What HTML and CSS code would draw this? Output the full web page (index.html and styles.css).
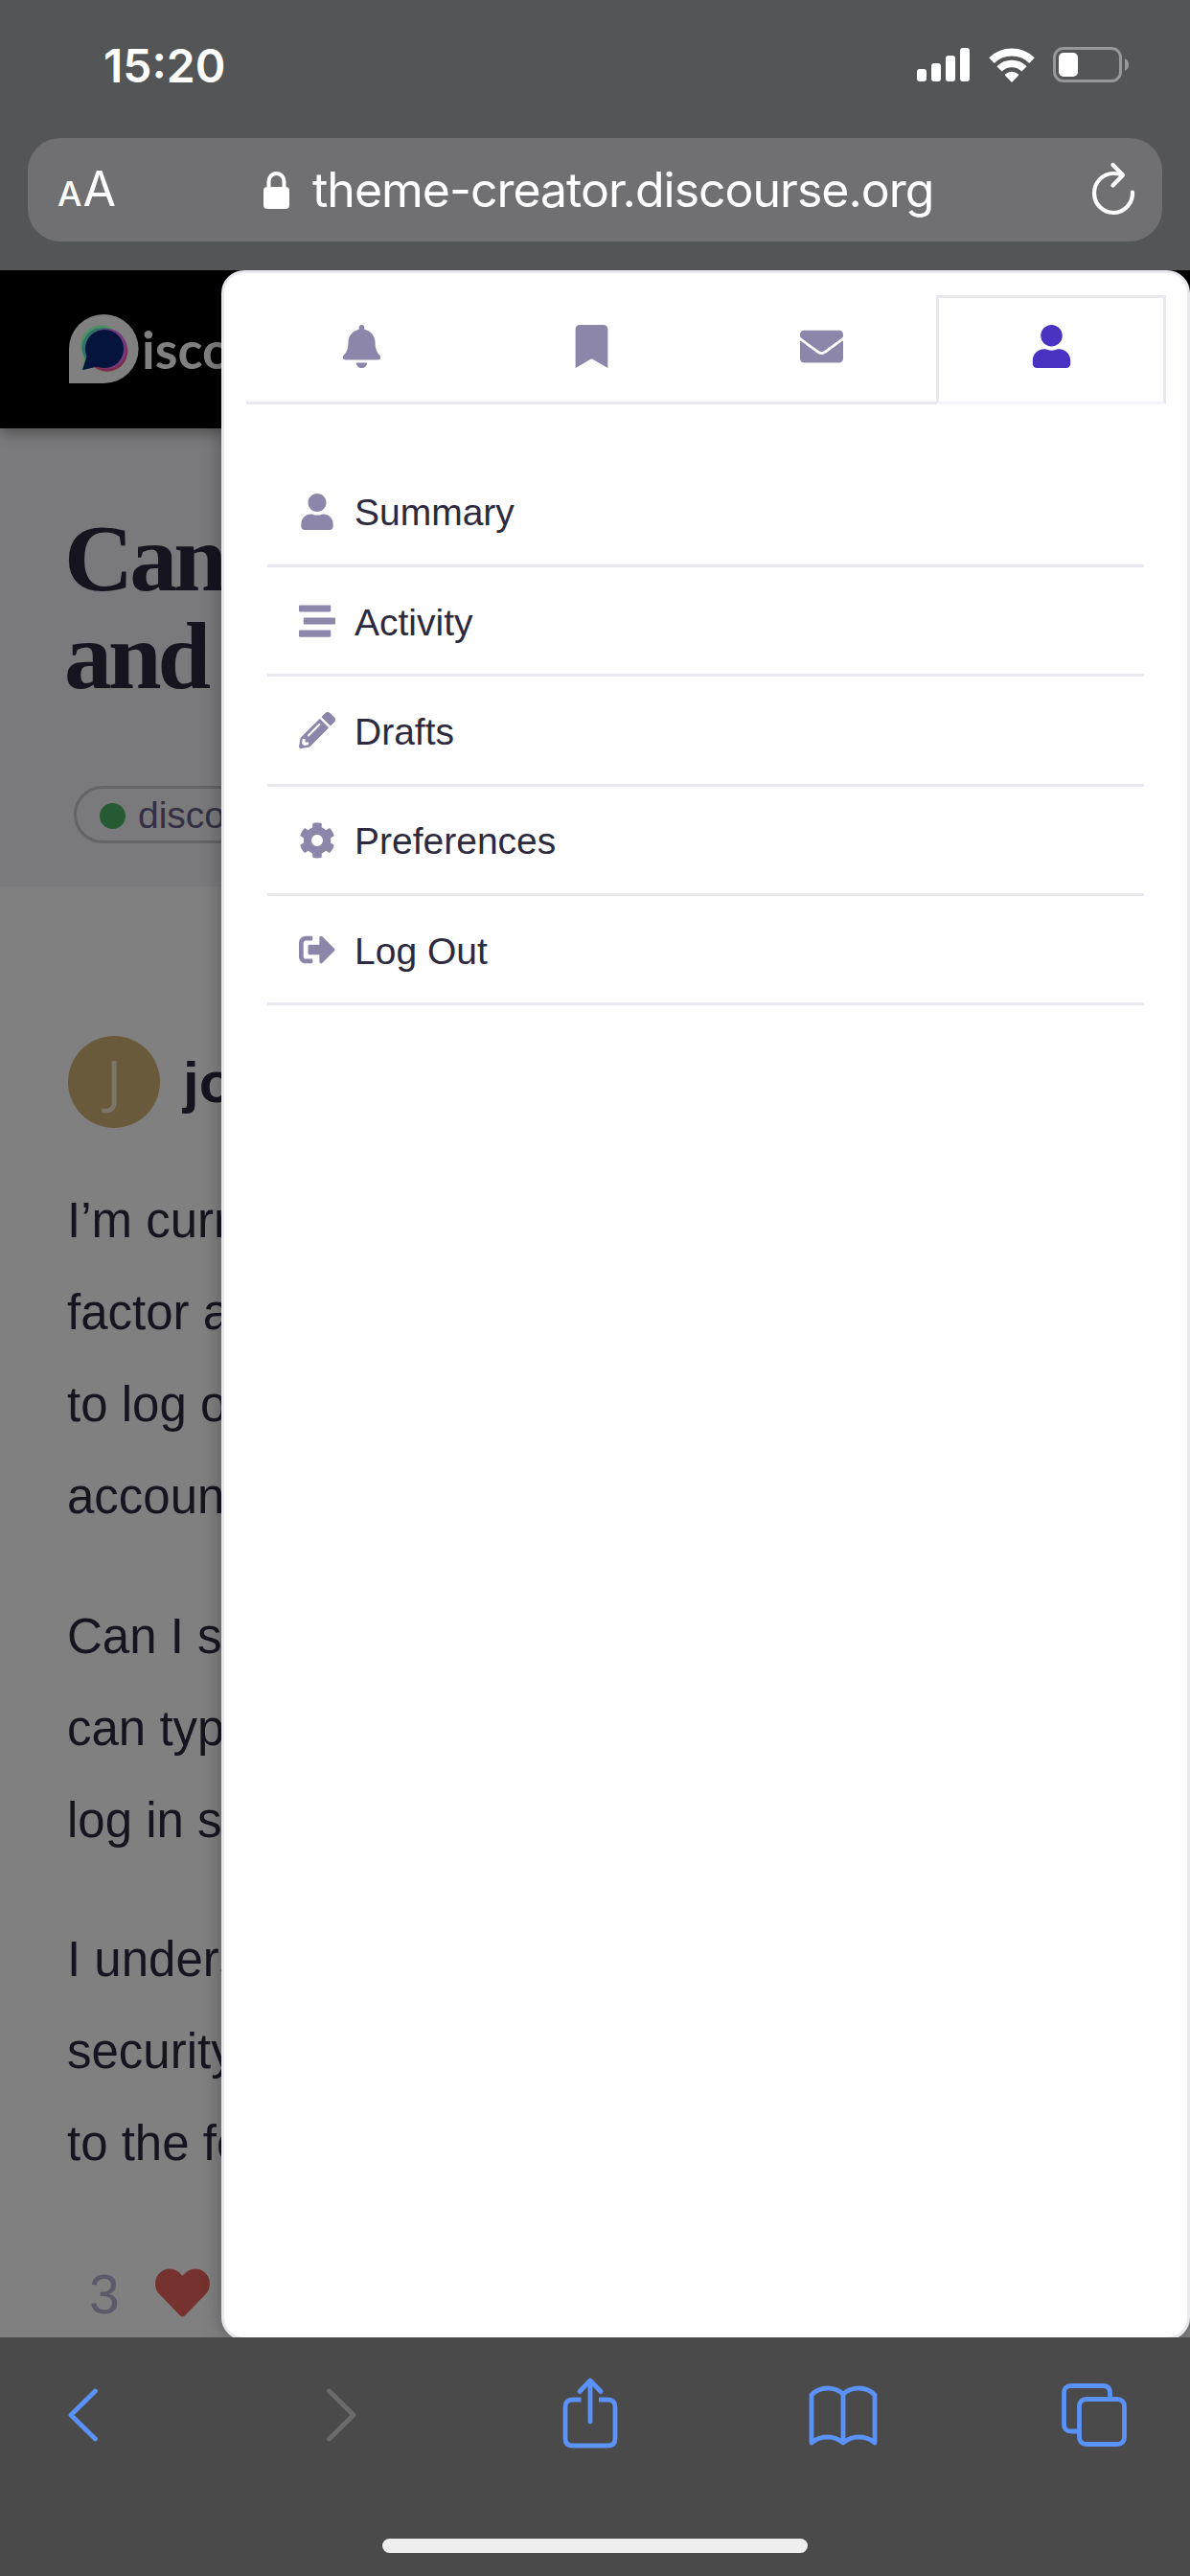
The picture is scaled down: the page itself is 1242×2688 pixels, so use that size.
FILE: index.html
```html
<!DOCTYPE html>
<html lang="en">
<head>
<meta charset="utf-8">
<title>theme-creator.discourse.org</title>
<link rel="stylesheet" href="styles.css">
</head>
<body>
<div class="phone">
  <header class="chrome">
    <div class="status">
      <span class="clock">15:20</span>
      <div class="indicators">
        <svg width="55" height="35" viewBox="0 0 55 35" fill="#fff"><rect y="22" width="10" height="13" rx="3"/><rect x="15" y="16" width="10" height="19" rx="3"/><rect x="30" y="8" width="10" height="27" rx="3"/><rect x="45" width="10" height="35" rx="3"/></svg>
        <svg class="wifi" width="48" height="36" viewBox="0 0 48 36" fill="none" stroke="#fff"><path stroke-width="8" d="M3 13.200A30 30 0 0 1 45 13.200"/><path stroke-width="7.500" d="M11 21.800A18.500 18.500 0 0 1 37 21.800"/><path fill="#fff" stroke="none" d="M24 36L17 28.700Q16.500 28 17.300 27.300Q24 22.300 30.700 27.300Q31.500 28 31 28.700Z"/></svg>
        <svg class="battery" width="80" height="37" viewBox="0 0 80 37"><rect x="1.500" y="1.500" width="69" height="34" rx="9.500" fill="none" stroke="#97989a" stroke-width="3"/><rect x="6" y="6" width="20" height="25" rx="5" fill="#fff"/><path d="M75 12Q79 14 79 18.500T75 25Z" fill="#97989a"/></svg>
      </div>
    </div>
    <div class="address">
      <span class="reader"><span class="reader-small">A</span><span class="reader-big">A</span></span>
      <div class="site">
        <svg width="27" height="39" viewBox="0 0 27 39"><path d="M5.500 18V10.500a8 8.500 0 0 1 16 0V18" fill="none" stroke="#fff" stroke-width="4"/><rect y="16" width="27" height="23" rx="4" fill="#fff"/></svg>
        <span class="url">theme-creator.discourse.org</span>
      </div>
      <svg class="reload" width="48" height="56" viewBox="0 0 48 56" fill="none" stroke="#fff" stroke-width="4.200" stroke-linecap="round" stroke-linejoin="round"><path d="M44 31.500A20 20.500 0 1 1 24 12Q29 12 33 13.500"/><path d="M23.500 3L34 13.800L23.500 24.500"/></svg>
    </div>
  </header>

  <main class="viewport">
    <div class="site-header">
      <svg width="73" height="72" viewBox="0 0 73 72"><path d="M0 72V36A36.300 36 0 1 1 36.300 72Z" fill="#808080"/><circle cx="33.700" cy="33" r="21.500" fill="#47935f"/><path d="M14 58L16 44L30 52Z" fill="#47935f"/><circle cx="35" cy="35" r="21.300" fill="#34706b"/><circle cx="39.800" cy="38.200" r="21.500" fill="#7c2b42"/><circle cx="39.500" cy="36" r="21" fill="#76367e"/><path d="M14 58L30 54L24 49Z" fill="#76367e"/><circle cx="37" cy="36" r="20" fill="#05143c"/><path d="M14 58L18.500 44L30 54.500Z" fill="#05143c"/></svg>
      <span class="wordmark">isco</span>
    </div>
    <section class="topic-title">
      <h1>Can<br>and</h1>
      <div class="category"><i></i><span>disco</span></div>
    </section>
    <article class="post">
      <div class="author"><span class="avatar">J</span><b>jo</b></div>
      <p>I’m curr<br>factor a<br>to log o<br>accoun</p>
      <p>Can I s<br>can typ<br>log in s</p>
      <p>I unders<br>security<br>to the fo</p>
      <div class="likes"><span>3</span><svg width="57" height="57" viewBox="0 0 512 512" fill="#75322f"><path d="M462.3 62.6C407.5 15.9 326 24.3 275.7 76.2L256 96.5l-19.7-20.3C186.1 24.3 104.5 15.9 49.7 62.600c-62.800 53.600-66.100 149.800-9.900 207.900l193.500 199.800c12.500 12.900 32.800 12.900 45.300 0l193.500-199.800c56.300-58.100 53-154.300-9.800-207.900z"/></svg></div>
    </article>

    <aside class="drawer">
      <nav class="tabs">
        <a class="tab"><svg viewBox="-32 0 512 512"><path d="M224 512c35.320 0 63.970-28.650 63.970-64H160.030c0 35.350 28.650 64 63.970 64zm215.390-149.710c-19.320-20.760-55.470-51.990-55.470-154.290 0-77.700-54.480-139.900-127.940-155.160V32c0-17.670-14.320-32-31.980-32s-31.980 14.330-31.980 32v20.840C118.560 68.100 64.080 130.300 64.080 208c0 102.300-36.150 133.530-55.470 154.290-6 6.450-8.660 14.160-8.610 21.710.11 16.400 12.980 32 32.100 32h383.800c19.120 0 32-15.600 32.100-32 .05-7.550-2.610-15.270-8.610-21.710z"/></svg></a>
        <a class="tab"><svg viewBox="-64 0 512 512"><path d="M0 512V48C0 21.490 21.490 0 48 0h288c26.510 0 48 21.490 48 48v464L192 400 0 512z"/></svg></a>
        <a class="tab"><svg viewBox="0 0 512 512"><path d="M502.300 190.800c3.900-3.100 9.700-.2 9.700 4.700V400c0 26.500-21.500 48-48 48H48c-26.500 0-48-21.500-48-48V195.600c0-5 5.700-7.800 9.700-4.700 22.400 17.400 52.100 39.500 154.100 113.600 21.100 15.400 56.700 47.800 92.200 47.600 35.700.3 72-32.800 92.300-47.600 102-74.100 131.600-96.300 154-113.700zM256 320c23.200.4 56.600-29.200 73.400-41.400 132.700-96.300 142.800-104.700 173.400-128.700 5.800-4.500 9.200-11.500 9.200-18.900v-19c0-26.500-21.500-48-48-48H48c-26.500 0-48 21.500-48 48v19c0 7.400 3.400 14.300 9.200 18.900 30.600 23.900 40.700 32.400 173.400 128.700 16.800 12.200 50.200 41.800 73.400 41.400z"/></svg></a>
        <a class="tab active"><svg viewBox="-32 0 512 512"><path d="M224 256c70.700 0 128-57.300 128-128S294.700 0 224 0 96 57.300 96 128s57.300 128 128 128zm89.600 32h-16.700c-22.200 10.200-46.900 16-72.900 16s-50.600-5.800-72.900-16h-16.700C60.200 288 0 348.200 0 422.400V464c0 26.500 21.500 48 48 48h352c26.500 0 48-21.500 48-48v-41.600c0-74.200-60.200-134.400-134.400-134.400z"/></svg></a>
      </nav>
      <ul class="links">
        <li><svg viewBox="-32 0 512 512"><path d="M224 256c70.700 0 128-57.300 128-128S294.700 0 224 0 96 57.300 96 128s57.300 128 128 128zm89.600 32h-16.700c-22.200 10.200-46.900 16-72.900 16s-50.600-5.800-72.900-16h-16.700C60.200 288 0 348.200 0 422.400V464c0 26.500 21.500 48 48 48h352c26.500 0 48-21.500 48-48v-41.600c0-74.200-60.200-134.400-134.400-134.400z"/></svg><span>Summary</span></li>
        <li><svg viewBox="0 0 512 512"><path d="M16 128h416c8.840 0 16-7.160 16-16V48c0-8.840-7.160-16-16-16H16C7.160 32 0 39.160 0 48v64c0 8.840 7.160 16 16 16zm480 80H80c-8.840 0-16 7.160-16 16v64c0 8.840 7.160 16 16 16h416c8.840 0 16-7.160 16-16v-64c0-8.840-7.160-16-16-16zm-64 176H16c-8.840 0-16 7.160-16 16v64c0 8.840 7.160 16 16 16h416c8.840 0 16-7.160 16-16v-64c0-8.840-7.160-16-16-16z"/></svg><span>Activity</span></li>
        <li><svg viewBox="0 0 512 512"><path d="M497.900 142.100l-46.100 46.100c-4.700 4.700-12.300 4.700-17 0l-111-111c-4.700-4.700-4.700-12.300 0-17l46.100-46.100c18.700-18.700 49.100-18.700 67.900 0l60.100 60.100c18.800 18.700 18.800 49.100 0 67.900zM284.200 99.800L21.600 362.400.4 483.900c-2.900 16.400 11.400 30.600 27.800 27.800l121.500-21.300 262.600-262.600c4.700-4.700 4.700-12.300 0-17l-111-111c-4.800-4.700-12.400-4.700-17.100 0zM124.100 339.900c-5.500-5.500-5.500-14.300 0-19.800l154-154c5.500-5.500 14.300-5.500 19.800 0s5.500 14.300 0 19.800l-154 154c-5.500 5.500-14.300 5.500-19.800 0zM88 424h48v36.300l-64.500 11.300-31.100-31.100L51.700 376H88v48z"/></svg><span>Drafts</span></li>
        <li><svg viewBox="0 0 512 512"><path d="M487.400 315.700l-42.600-24.600c4.300-23.200 4.300-47 0-70.200l42.600-24.600c4.900-2.800 7.100-8.600 5.500-14-11.100-35.600-30-67.800-54.700-94.600-3.800-4.100-10-5.100-14.800-2.300L380.800 110c-17.900-15.400-38.500-27.300-60.800-35.100V25.800c0-5.600-3.900-10.500-9.400-11.700-36.700-8.200-74.300-7.800-109.200 0-5.500 1.200-9.400 6.100-9.400 11.700V75c-22.200 7.900-42.800 19.800-60.800 35.100L88.700 85.500c-4.900-2.800-11-1.900-14.800 2.300-24.700 26.700-43.600 58.900-54.700 94.600-1.700 5.400.6 11.200 5.500 14L67.300 221c-4.300 23.200-4.300 47 0 70.200l-42.600 24.600c-4.900 2.800-7.100 8.600-5.500 14 11.100 35.600 30 67.800 54.700 94.600 3.800 4.100 10 5.100 14.800 2.300l42.600-24.600c17.900 15.400 38.500 27.300 60.800 35.100v49.200c0 5.600 3.900 10.500 9.400 11.700 36.700 8.200 74.300 7.800 109.200 0 5.500-1.200 9.400-6.100 9.400-11.700v-49.200c22.200-7.900 42.800-19.800 60.800-35.100l42.600 24.600c4.900 2.800 11 1.900 14.800-2.300 24.700-26.700 43.600-58.900 54.700-94.600 1.500-5.500-.7-11.300-5.600-14.100zM256 336c-44.100 0-80-35.900-80-80s35.900-80 80-80 80 35.900 80 80-35.900 80-80 80z"/></svg><span>Preferences</span></li>
        <li><svg viewBox="0 0 512 512"><path d="M497 273L329 441c-15 15-41 4.500-41-17v-96H152c-13.300 0-24-10.700-24-24v-96c0-13.300 10.700-24 24-24h136V88c0-21.400 25.900-32 41-17l168 168c9.300 9.400 9.300 24.600 0 34zM192 436v-40c0-6.600-5.400-12-12-12H96c-17.700 0-32-14.300-32-32V160c0-17.700 14.300-32 32-32h84c6.600 0 12-5.400 12-12V76c0-6.600-5.400-12-12-12H96c-53 0-96 43-96 96v192c0 53 43 96 96 96h84c6.600 0 12-5.400 12-12z"/></svg><span>Log Out</span></li>
      </ul>
    </aside>
  </main>

  <footer class="toolbar">
    <div class="actions">
      <svg width="72" height="72" viewBox="0 0 72 72"><path d="M48.500 11L23 36l25.500 25"/></svg>
      <svg class="disabled" width="72" height="72" viewBox="0 0 72 72"><path d="M23.500 11L49 36L23.500 61"/></svg>
      <svg width="72" height="72" viewBox="0 0 72 72"><path class="butt" d="M26.500 20H17.500Q10 20 10 27.500V60.500Q10 68 17.500 68H54.500Q62 68 62 60.500V27.500Q62 20 54.500 20H45"/><path d="M36 43V1M25 11.500L36 0L47 11.500"/></svg>
      <svg width="76" height="72" viewBox="0 0 76 72"><path d="M38 14Q31 8 21.500 8T5 15V65Q12 59 21.500 59T38 65Q45 59 54.500 59T71 65V15Q64 8 54.500 8T38 14V65"/></svg>
      <svg width="72" height="72" viewBox="0 0 72 72"><rect x="20.500" y="19.500" width="47" height="47" rx="7"/><path class="butt" d="M20.500 53H12Q4.500 53 4.500 45.500V13Q4.500 5.500 12 5.500H45Q52.500 5.500 52.500 13V19.500"/></svg>
    </div>
    <div class="home"></div>
  </footer>
</div>
</body>
</html>
```
FILE: styles.css
```css
* { box-sizing: border-box; }
body { margin: 0; font-family: "Liberation Sans", Arial, sans-serif; }
svg { display: block; flex: none; overflow: visible; }
h1, p, ul { margin: 0; padding: 0; font-weight: normal; list-style: none; }

.phone { width: 1242px; height: 2688px; display: flex; flex-direction: column; overflow: hidden; }

/* Browser chrome */
.chrome { height: 282px; background: #545557; color: #fff; font-family: Inter, sans-serif; }
.status { height: 144px; padding: 0 63px 0 108px; display: flex; align-items: center; justify-content: space-between; }
.clock { font-size: 48px; font-weight: 600; line-height: 60px; margin-top: -7px; }
.indicators { display: flex; align-items: center; margin-top: -9px; }
.indicators .wifi { margin-left: 20px; }
.indicators .battery { margin-left: 19px; }
.address { height: 108px; margin: 0 29px; padding: 0 27px 0 31px; border-radius: 34px; background: #707072; display: grid; grid-template-columns: 215px 1fr auto; align-items: center; }
.reader { display: flex; align-items: baseline; gap: 1px; line-height: 60px; margin-top: 3px; }
.reader-small { font-size: 36px; font-weight: 500; }
.reader-big { font-size: 50px; }
.site { display: flex; align-items: center; gap: 24px; }
.url { font-size: 50px; line-height: 60px; letter-spacing: -1.020px; white-space: nowrap; }
.reload { margin-top: -2px; }

/* Page behind the drawer */
.viewport { position: relative; height: 2157px; overflow: hidden; background: #808080; color: #16141f; }
.site-header { position: relative; height: 165px; background: #000; padding: 46px 0 0 72px; display: flex; align-items: flex-start; box-shadow: 0 6px 12px 0 rgba(0, 0, 0, .3); }
.wordmark { font: 700 54px/60px Lato, sans-serif; color: #808080; margin: 7px 0 0 3px; }
.topic-title { height: 478px; background: #7a7a7c; padding: 85px 0 0 67px; }
.topic-title h1 { font: 700 100px/102px "Liberation Serif", serif; letter-spacing: -4px; }
.category { margin: 84px 0 0 10px; width: 400px; height: 60px; padding-left: 24px; border: 3px solid #646464; border-radius: 30px; display: flex; align-items: center; gap: 13px; font-size: 39px; color: #332f45; }
.category i { width: 27px; height: 27px; border-radius: 50%; background: #255a33; margin-top: 2px; }
.category span { margin-top: 2px; }
.post { padding: 156px 0 0 70px; }
.author { display: flex; align-items: center; height: 96px; padding-left: 1px; gap: 24px; font-size: 60px; }
.avatar { width: 96px; height: 96px; border-radius: 50%; background: #6a5a3c; color: #7c756a; font: 60px/92px "Open Sans", sans-serif; text-align: center; }
.post p { font-size: 51px; line-height: 96px; margin-bottom: 49.500px; white-space: nowrap; }
.author + p { margin-top: 49px; }
.likes { display: flex; align-items: center; margin: 73px 0 0 23px; gap: 37px; font-size: 57px; line-height: 66px; color: #5c5a6a; }
.post p:last-of-type { margin-bottom: 0; }
.likes span { padding-top: 3px; }

/* Slide-in user menu */
.drawer { position: absolute; top: 0; left: 231px; width: 1011px; height: 2160px; background: #fff; border: 3px solid #e9e8ee; border-radius: 24px; padding: 23px 22px 0 23px; box-shadow: 0 0 22px rgba(0, 0, 0, .3); color: #2d2a3f; }
.tabs { display: grid; grid-template-columns: repeat(4, 240px); }
.tab { height: 114px; padding-top: 3px; border-bottom: 3px solid #e9e8ee; display: flex; align-items: center; justify-content: center; fill: #8c86aa; }
.tab svg { width: 45px; height: 45px; margin-top: -7px; }
.tab.active { padding-top: 0; border: 3px solid; border-color: #e9e8ee #e9e8ee #f5f4fa; fill: #4a32c3; }
.links { margin: 55.500px 23px 0 22px; }
.links li { height: 114.400px; padding: 2px 0 0 33px; border-bottom: 3px solid #e9e8ee; display: flex; align-items: center; gap: 20px; font-size: 39px; line-height: 46px; }
.links svg { width: 38px; height: 38px; fill: #8c86aa; margin-top: -1px; }
.links span { margin-top: 2px; }

/* Browser toolbar */
.toolbar { height: 249px; background: #4a4a4a; display: flex; flex-direction: column; align-items: center; justify-content: space-between; padding: 45px 0 24px; }
.actions { width: 1140px; display: grid; grid-template-columns: 269px 260px 262px 264px auto; fill: none; stroke: #5a92f7; stroke-width: 4.800; stroke-linecap: round; stroke-linejoin: round; }
.actions .disabled { stroke: #6b6b6b; }
.actions .butt { stroke-linecap: butt; }
.home { width: 444px; height: 15px; border-radius: 8px; background: #eee; }
```
